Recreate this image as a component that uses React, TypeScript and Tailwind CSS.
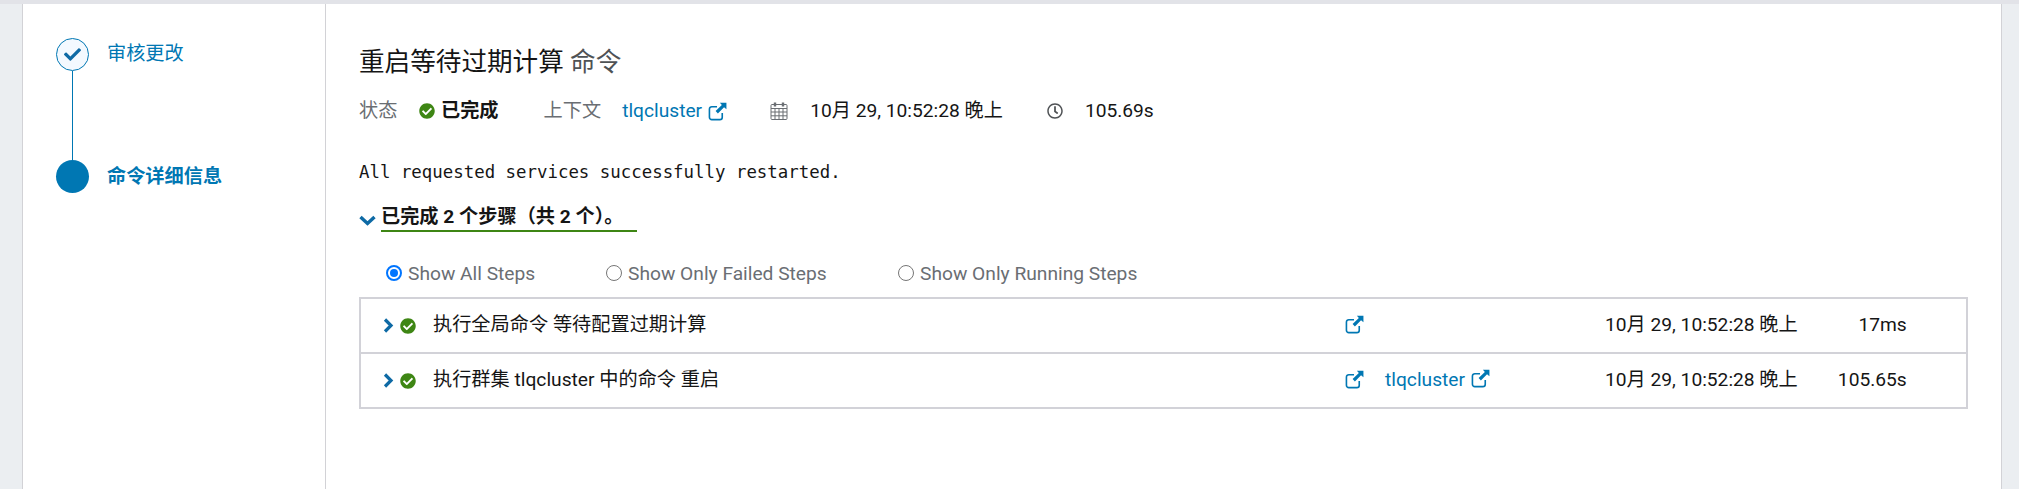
import React from "react";
import { FaCheck, FaCheckCircle, FaRegClock } from "react-icons/fa";

const ExternalLink = ({ className }: { className?: string }) => (
  <svg viewBox="0 0 20 20" className={className} fill="none">
    <path d="M15 11.5V16a2.5 2.5 0 0 1-2.5 2.5H4A2.5 2.5 0 0 1 1.5 16V7.5A2.5 2.5 0 0 1 4 5h5.5" stroke="currentColor" strokeWidth="1.7" />
    <path d="M12.5 0.8H19.4V7.7L16.9 5.4L10.4 12L8 9.6L14.6 3.1Z" fill="currentColor" />
  </svg>
);

const Calendar = ({ className }: { className?: string }) => (
  <svg viewBox="0 0 18 18" className={className} fill="none" stroke="currentColor" strokeWidth="1">
    <rect x="1" y="2.5" width="16" height="15" rx="1" />
    <path d="M1 6.5h16M1 10h16M1 13.8h16M5 6.5v11M9 6.5v11M13 6.5v11" />
    <path d="M5 0.5v4M13 0.5v4" strokeWidth="2.4" />
  </svg>
);

const ChevronRight = ({ className }: { className?: string }) => (
  <svg viewBox="0 0 11 15" className={className} fill="none" stroke="currentColor" strokeWidth="3.2">
    <path d="M2 1.5L8 7.5L2 13.5" />
  </svg>
);

const ChevronDown = ({ className }: { className?: string }) => (
  <svg viewBox="0 0 17 11" className={className} fill="none" stroke="currentColor" strokeWidth="3.4">
    <path d="M1.5 2L8.5 8.5L15.5 2" />
  </svg>
);

const steps = [
  { label: "执行全局命令 等待配置过期计算", cluster: "", duration: "17ms" },
  { label: "执行群集 tlqcluster 中的命令 重启", cluster: "tlqcluster", duration: "105.65s" },
];

const radios = [
  { label: "Show All Steps", width: "w-[220px]", checked: true },
  { label: "Show Only Failed Steps", width: "w-[292px]", checked: false },
  { label: "Show Only Running Steps", width: "", checked: false },
];

export default function App() {
  return (
    <div className="flex h-[489px] flex-col overflow-hidden bg-[#ebeef1] font-['Roboto','Noto_Sans_CJK_SC',sans-serif] text-[19.2px] text-[#151515]">
      <div className="h-[4px] bg-[#e2e3e8]" />
      <div className="ml-[22px] mr-[17px] flex flex-1 border-x border-[#d2d2d6] bg-white">
        {/* wizard nav */}
        <div className="w-[303px] border-r border-[#d2d2d6] pl-[33px] pt-[34px]">
          <div className="flex h-[122px] gap-[18px]">
            <div className="flex w-[33px] flex-col items-center">
              <div className="flex size-[33px] items-center justify-center rounded-full border border-[#0077b3] bg-[#f3f9ff] text-[#0e6aa5]">
                <FaCheck className="size-[17px]" />
              </div>
              <div className="w-px flex-1 bg-[#0077b3]" />
            </div>
            <span className="pt-[2px] leading-[28px] text-[#0077b3]">审核更改</span>
          </div>
          <div className="flex gap-[18px]">
            <div className="size-[33px] rounded-full bg-[#0077b3]" />
            <span className="pt-[3px] font-bold leading-[28px] text-[#0077b3]">命令详细信息</span>
          </div>
        </div>

        {/* details */}
        <div className="flex-1 px-[33px] pt-[42px]">
          <h1 className="text-[25.6px] leading-[32px]">
            重启等待过期计算 <span className="text-[#4f5255]">命令</span>
          </h1>

          <div className="mt-[19px] flex h-[28px] items-center">
            <span className="w-[60px] text-[#6a6e73]">状态</span>
            <FaCheckCircle className="size-[16px] text-[#3e8614]" />
            <span className="ml-[6px] font-bold">已完成</span>
            <span className="ml-[45px] text-[#6a6e73]">上下文</span>
            <span className="ml-[21px] text-[#0077b3]">tlqcluster</span>
            <ExternalLink className="ml-[6px] size-[19px] text-[#0077b3]" />
            <Calendar className="ml-[43px] size-[18px] text-[#6a6e73]" />
            <span className="ml-[22px]">10月 29, 10:52:28 晚上</span>
            <FaRegClock className="ml-[44px] size-[16px] text-[#4f5255]" />
            <span className="ml-[22px]">105.69s</span>
          </div>

          <pre className="mt-[35px] font-['DejaVu_Sans_Mono','Liberation_Mono',monospace] text-[17.4px] leading-[24px]">
            All requested services successfully restarted.
          </pre>

          <div className="mt-[20px] flex items-start">
            <ChevronDown className="mr-[5px] mt-[11px] h-[11px] w-[17px] text-[#0e6aa5]" />
            <span className="w-[256px] border-b-2 border-[#3e8614] font-bold leading-[26px]">已完成 2 个步骤（共 2 个）。</span>
          </div>

          <div className="mt-[29px] ml-[27px] flex h-[26px] items-center">
            {radios.map((r) => (
              <label key={r.label} className={`flex items-center gap-[6px] text-[#6a6e73] ${r.width}`}>
                <span
                  className={
                    r.checked
                      ? "-mt-[3px] flex size-[16px] items-center justify-center rounded-full border-2 border-[#0075ff]"
                      : "-mt-[3px] size-[16px] rounded-full border border-[#767676]"
                  }
                >
                  {r.checked ? <span className="size-[8px] rounded-full bg-[#0075ff]" /> : null}
                </span>
                {r.label}
              </label>
            ))}
          </div>

          <div className="mt-[10px] border-2 border-[#d2d2d8]">
            {steps.map((s, i) => (
              <div key={s.label} className={`flex items-center ${i > 0 ? "h-[55px] border-t-2 border-[#d2d2d8]" : "h-[53px]"}`}>
                <ChevronRight className="ml-[22px] h-[15px] w-[11px] text-[#0e6aa5]" />
                <FaCheckCircle className="ml-[6px] size-[16px] text-[#3e8614]" />
                <span className="ml-[17px] w-[912px]">{s.label}</span>
                <ExternalLink className="-mt-[3px] size-[19px] text-[#0077b3]" />
                <span className="ml-[21px] flex w-[220px] items-center text-[#0077b3]">
                  {s.cluster}
                  {s.cluster ? <ExternalLink className="ml-[6px] -mt-[3px] size-[19px]" /> : null}
                </span>
                <span>10月 29, 10:52:28 晚上</span>
                <span className="w-[109px] text-right">{s.duration}</span>
              </div>
            ))}
          </div>
        </div>
      </div>
    </div>
  );
}
